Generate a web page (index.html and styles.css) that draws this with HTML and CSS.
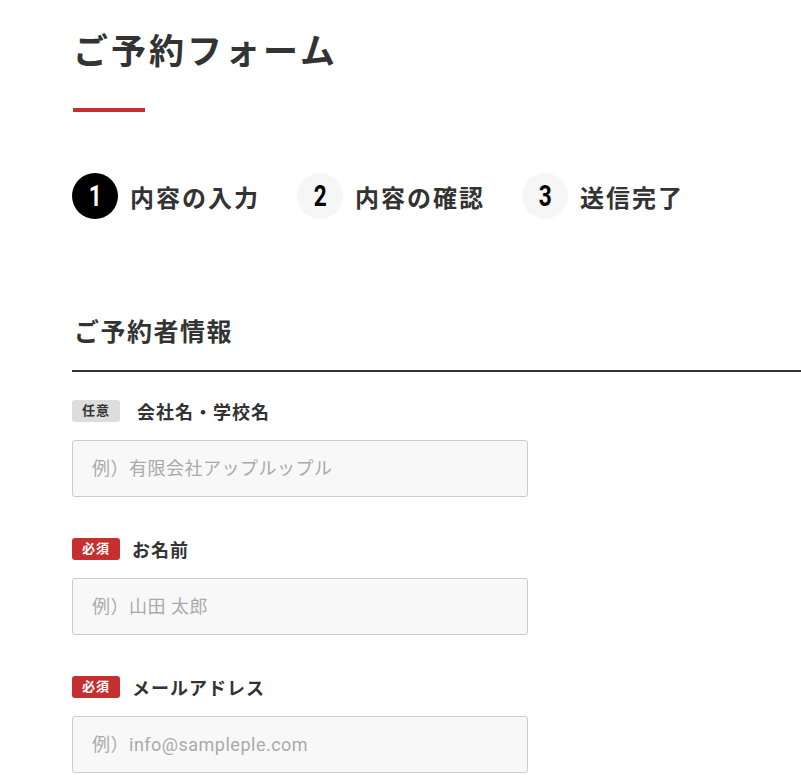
FILE: index.html
```html
<!DOCTYPE html>
<html lang="ja">
<head>
    <meta charset="UTF-8">
    <meta name="viewport" content="width=device-width, initial-scale=1.0">
    <title>ご予約フォーム</title>
    <link rel="stylesheet" href="styles.css">
</head>
<body>
    <div class="container">
        <h1 class="page-title">ご予約フォーム</h1>

        <!-- Steps -->
        <ol class="steps">
            <li class="step current"><span class="step-num"><span>1</span></span>内容の入力</li>
            <li class="step"><span class="step-num"><span>2</span></span>内容の確認</li>
            <li class="step"><span class="step-num"><span>3</span></span>送信完了</li>
        </ol>

        <h2 class="section-title">ご予約者情報</h2>

        <form class="form">
            <div class="form-group">
                <label class="form-label" for="company"><span class="badge">任意</span><span class="label-text first">会社名・学校名</span></label>
                <input type="text" id="company" placeholder="例）有限会社アップルップル">
            </div>
            <div class="form-group">
                <label class="form-label" for="name"><span class="badge required">必須</span><span class="label-text">お名前</span></label>
                <input type="text" id="name" placeholder="例）山田 太郎">
            </div>
            <div class="form-group">
                <label class="form-label" for="email"><span class="badge required">必須</span><span class="label-text">メールアドレス</span></label>
                <input type="email" id="email" placeholder="例）info@sampleple.com">
            </div>
        </form>
    </div>
</body>
</html>
```

FILE: styles.css
```css
/* General Styling */
body {
    font-family: Roboto, "Noto Sans CJK JP", sans-serif;
    background: #fff;
    margin: 0;
    padding: 0;
    color: #333;
}
.container {
    padding: 26px 0 40px 72px;
}
.page-title {
    margin: 0;
    font-size: 35px;
    font-weight: bold;
    letter-spacing: 3px;
    line-height: 54px;
    padding-left: 1px;
}
.page-title::after {
    content: "";
    display: block;
    width: 72px;
    height: 4px;
    background: #c62f2f;
    margin-top: 28px;
}

/* Steps */
.steps {
    list-style: none;
    margin: 61px 0 0;
    padding: 0;
    display: flex;
    gap: 37px;
}
.step {
    display: flex;
    align-items: center;
    gap: 12px;
    font-size: 24px;
    font-weight: bold;
    letter-spacing: 2px;
    color: #333;
}
.step-num {
    width: 46px;
    height: 46px;
    border-radius: 50%;
    background: #f6f6f6;
    color: #000;
    display: flex;
    align-items: center;
    justify-content: center;
    font-family: Roboto, sans-serif;
    font-size: 29px;
    letter-spacing: 0;
}
.step-num span {
    display: inline-block;
    transform: scaleX(0.78);
}
.step.current .step-num {
    background: #000;
    color: #fff;
}

/* Section */
.section-title {
    margin: 94px 0 0;
    font-size: 25px;
    font-weight: bold;
    letter-spacing: 1.5px;
    line-height: 40px;
    padding-left: 2px;
    padding-bottom: 17px;
    border-bottom: 2px solid #333;
}

/* Form */
.form {
    margin-top: 28px;
}
.form-group {
    width: 456px;
    margin-bottom: 41px;
}
.form-label {
    display: flex;
    align-items: center;
    height: 22px;
    margin-bottom: 18px;
}
.badge {
    width: 48px;
    height: 22px;
    line-height: 22px;
    text-align: center;
    border-radius: 3px;
    background: #ddd;
    color: #333;
    font-size: 13px;
    font-weight: bold;
    letter-spacing: 1px;
}
.badge.required {
    background: #c62f2f;
    color: #fff;
}
.label-text {
    margin-left: 12px;
    font-size: 18px;
    font-weight: bold;
    letter-spacing: 1px;
}
.label-text.first {
    margin-left: 17px;
}
input {
    box-sizing: border-box;
    width: 100%;
    height: 57px;
    padding: 0 19px;
    border: 1px solid #ccc;
    border-radius: 3px;
    background: #f8f8f8;
    font-family: Roboto, "Noto Sans CJK JP", sans-serif;
    font-size: 18px;
    letter-spacing: 0.5px;
    color: #333;
}
input::placeholder {
    color: #aaa;
}
```
